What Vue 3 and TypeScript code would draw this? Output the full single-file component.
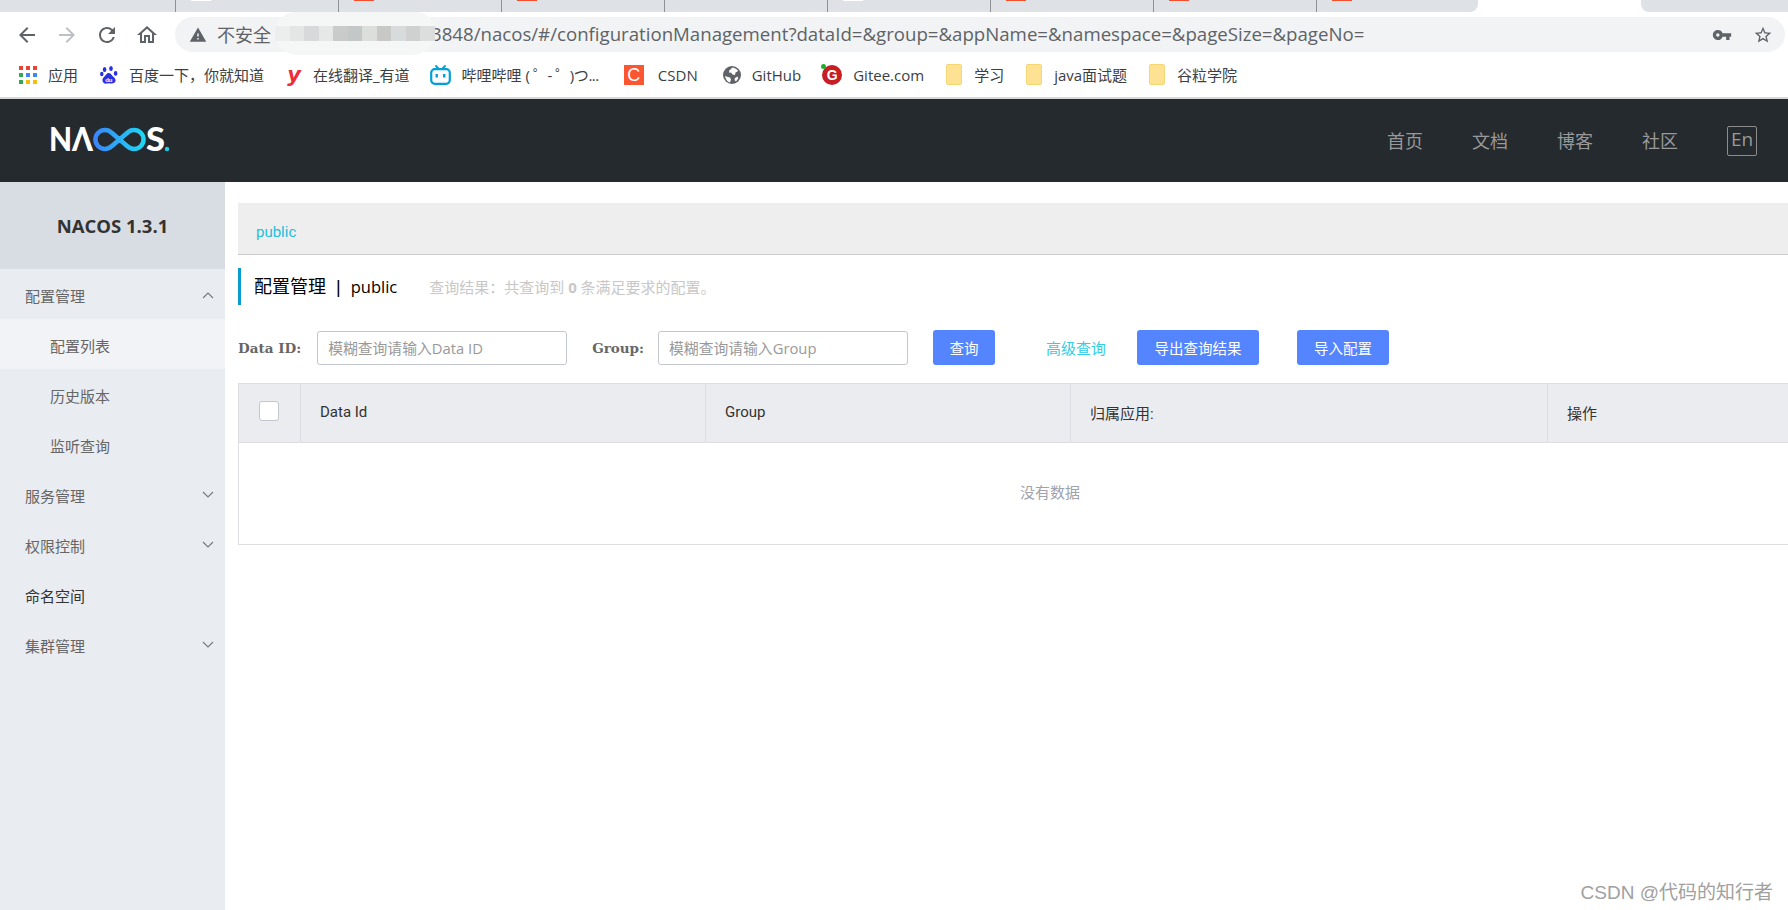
<script setup lang="ts">
type Tab = { favicon?: 'red' | 'white'; active?: boolean }
type SideItem = { label: string; sub?: boolean; selected?: boolean; dark?: boolean; arrow?: 'up' | 'down' }

const tabs: Tab[] = [
  {},
  { favicon: 'white' },
  { favicon: 'red' },
  { favicon: 'red' },
  {},
  { favicon: 'white' },
  { favicon: 'red' },
  { favicon: 'red' },
  { favicon: 'red' },
  { active: true },
  {},
]

const mosaic = ['#eceeee', '#e4e6e6', '#d7d9da', '#e6e8e8', '#c9cbca', '#c3c7c8', '#dcdedc', '#c8c9c7', '#d8dbdc', '#cfd1d1', '#dcdede']

const navLinks = ['首页', '文档', '博客', '社区']

const sideItems: SideItem[] = [
  { label: '配置管理', arrow: 'up' },
  { label: '配置列表', sub: true, selected: true },
  { label: '历史版本', sub: true },
  { label: '监听查询', sub: true },
  { label: '服务管理', arrow: 'down' },
  { label: '权限控制', arrow: 'down' },
  { label: '命名空间', dark: true },
  { label: '集群管理', arrow: 'down' },
]
</script>

<template>
  <div class="page">
    <div class="tab-strip">
      <div
        v-for="(tab, i) in tabs"
        :key="i"
        class="tab"
        :class="{ active: tab.active, 'before-active': tabs[i + 1]?.active, 'after-active': tabs[i - 1]?.active }"
      >
        <span v-if="tab.favicon" class="favicon" :class="tab.favicon"></span>
      </div>
    </div>

    <div class="toolbar">
      <svg class="tool-btn" viewBox="0 0 24 24"><path fill="#5f6368" d="M20 11H7.83l5.59-5.59L12 4l-8 8 8 8 1.41-1.41L7.83 13H20v-2z" /></svg>
      <svg class="tool-btn" viewBox="0 0 24 24"><path fill="#bdc1c6" d="M4 11h12.17l-5.59-5.59L12 4l8 8-8 8-1.41-1.41L16.17 13H4v-2z" /></svg>
      <svg class="tool-btn" viewBox="0 0 24 24"><path fill="#5f6368" d="M17.65 6.35A7.958 7.958 0 0012 4c-4.42 0-7.99 3.58-7.99 8s3.57 8 7.99 8c3.73 0 6.84-2.55 7.73-6h-2.08A5.99 5.99 0 0112 18c-3.31 0-6-2.69-6-6s2.69-6 6-6c1.66 0 3.14.69 4.22 1.78L13 11h7V4l-2.35 2.35z" /></svg>
      <svg class="tool-btn" viewBox="0 0 24 24"><path fill="#5f6368" d="M12 5.69l5 4.5V18h-2v-6H9v6H7v-7.81l5-4.5M12 3L2 12h3v8h6v-6h2v6h6v-8h3L12 3z" /></svg>

      <div class="omnibox">
        <svg class="warn" viewBox="0 0 24 24"><path fill="#5f6368" d="M1 21h22L12 2 1 21zm12-3h-2v-2h2v2zm0-4h-2v-4h2v4z" /></svg>
        <span class="not-secure">不安全</span>
        <span class="url">3848/nacos/#/configurationManagement?dataId=&amp;group=&amp;appName=&amp;namespace=&amp;pageSize=&amp;pageNo=</span>
        <svg class="omni-icon key" viewBox="0 0 24 24"><path fill="#5f6368" d="M12.65 10A5.99 5.99 0 007 6c-3.31 0-6 2.69-6 6s2.69 6 6 6a5.99 5.99 0 005.65-4H17v4h4v-4h2v-4H12.65zM7 14c-1.1 0-2-.9-2-2s.9-2 2-2 2 .9 2 2-.9 2-2 2z" /></svg>
        <svg class="omni-icon star" viewBox="0 0 24 24"><path fill="#5f6368" d="M22 9.24l-7.19-.62L12 2 9.19 8.63 2 9.24l5.46 4.73L5.82 21 12 17.27 18.18 21l-1.63-7.03L22 9.24zM12 15.4l-3.76 2.27 1-4.28-3.32-2.88 4.38-.38L12 6.1l1.71 4.04 4.38.38-3.32 2.88 1 4.28L12 15.4z" /></svg>
      </div>

      <!-- smudged host name -->
      <div class="smudge">
        <span v-for="(c, i) in mosaic" :key="i" class="cell" :style="{ background: c }"></span>
      </div>
    </div>

    <div class="bookmarks">
      <div class="bm">
        <svg class="bm-icon" viewBox="0 0 18 18">
          <rect x="0" y="0" width="4" height="4" fill="#ea4335" /><rect x="7" y="0" width="4" height="4" fill="#ea4335" /><rect x="14" y="0" width="4" height="4" fill="#ea4335" />
          <rect x="0" y="7" width="4" height="4" fill="#34a853" /><rect x="7" y="7" width="4" height="4" fill="#4285f4" /><rect x="14" y="7" width="4" height="4" fill="#4285f4" />
          <rect x="0" y="14" width="4" height="4" fill="#34a853" /><rect x="7" y="14" width="4" height="4" fill="#fbbc05" /><rect x="14" y="14" width="4" height="4" fill="#fbbc05" />
        </svg>
        <span>应用</span>
      </div>
      <div class="bm">
        <svg class="bm-icon" viewBox="0 0 18 18">
          <ellipse cx="4.6" cy="3.6" rx="1.8" ry="2.5" fill="#2932e1" />
          <ellipse cx="11" cy="2.6" rx="1.8" ry="2.5" fill="#2932e1" />
          <ellipse cx="1.8" cy="8" rx="1.7" ry="2.2" fill="#2932e1" />
          <ellipse cx="15.6" cy="7.4" rx="1.8" ry="2.3" fill="#2932e1" />
          <path fill="#2932e1" d="M8.6 7C6.8 7 6 9 4.5 10.5 3 12 2 13.2 2.6 15.2c.6 2 2.4 2.6 3.8 2.4 1-.1 1.6-.4 2.4-.4s1.500.4 2.800.4c2 0 4-1.100 4-3.300 0-2-2-3-3.300-4.500C11.300 8.600 10.600 7 8.600 7z" />
          <text x="8.800" y="15.500" class="du">du</text>
        </svg>
        <span>百度一下，你就知道</span>
      </div>
      <div class="bm">
        <span class="bm-glyph youdao">y</span>
        <span>在线翻译_有道</span>
      </div>
      <div class="bm bili">
        <svg class="bm-icon" viewBox="0 0 21 20">
          <path d="M6 1l3 3M15 1l-3 3" stroke="#00a1d6" stroke-width="1.800" stroke-linecap="round" fill="none" />
          <rect x="1.200" y="4.200" width="18.600" height="14.600" rx="3.500" fill="none" stroke="#00a1d6" stroke-width="2.200" />
          <rect x="5.500" y="9" width="2.400" height="3.500" fill="#00a1d6" />
          <rect x="13" y="9" width="2.400" height="3.500" fill="#00a1d6" />
        </svg>
        <span>哔哩哔哩 <span class="kaomoji">( ゜- ゜)つ...</span></span>
      </div>
      <div class="bm csdn-bm">
        <span class="bm-glyph csdn">C</span>
        <span>CSDN</span>
      </div>
      <div class="bm github-bm">
        <svg class="bm-icon" viewBox="0 0 18 18">
          <circle cx="9" cy="9" r="9" fill="#5f6368" />
          <path fill="#fff" d="M9.500 1.500C12 2 14 3.200 15.200 5l-2.700 1.500-.5 2.500-2.500-.5L8 6.500l-1.500.5L6 4.800zM2 10l3 1 2 .5 1 2-1 3C4.500 16 2.800 13.500 2 10zM12 12l2.500-1.500.8 1.800L13 15.500 11.500 14z" />
        </svg>
        <span>GitHub</span>
      </div>
      <div class="bm gitee">
        <span class="gitee-icon"><span class="gitee-dot"></span>G</span>
        <span>Gitee.com</span>
      </div>
      <div v-for="name in ['学习', 'java面试题', '谷粒学院']" :key="name" class="bm folder-bm">
        <span class="folder"></span>
        <span>{{ name }}</span>
      </div>
    </div>

    <header class="nacos-header">
      <svg class="logo" viewBox="0 -6 122 36">
        <defs>
          <linearGradient id="inf" x1="0" y1="0" x2="1" y2="0">
            <stop offset="0" stop-color="#3a86fb" />
            <stop offset="1" stop-color="#1fd6f2" />
          </linearGradient>
        </defs>
        <text class="logo-text" x="0" y="23" textLength="44" lengthAdjust="spacingAndGlyphs">NΛ</text>
        <path d="M62.700 4.800A9.500 9.500 0 1 0 62.700 18.200L78.300 4.800A9.500 9.500 0 1 1 78.300 18.200Z" fill="none" stroke="url(#inf)" stroke-width="4.500" />
        <text class="logo-text" x="97" y="23" textLength="19" lengthAdjust="spacingAndGlyphs">S</text>
        <circle cx="118" cy="21" r="2.200" fill="#1fcfe8" />
      </svg>
      <nav class="nav-links">
        <a v-for="link in navLinks" :key="link" class="nav-link">{{ link }}</a>
        <span class="lang-btn">En</span>
      </nav>
    </header>

    <div class="body-row">
      <aside class="sidebar">
        <div class="product">NACOS 1.3.1</div>
        <div
          v-for="item in sideItems"
          :key="item.label"
          class="side-item"
          :class="{ sub: item.sub, selected: item.selected, dark: item.dark }"
        >
          <span>{{ item.label }}</span>
          <svg v-if="item.arrow" class="chevron" viewBox="0 0 12 8">
            <polyline
              :points="item.arrow === 'up' ? '1,7 6,2 11,7' : '1,1 6,6 11,1'"
              fill="none"
              stroke="#777"
              stroke-width="1.100"
            />
          </svg>
        </div>
      </aside>

      <main class="content">
        <div class="namespace-bar"><a class="ns-link">public</a></div>

        <div class="title-row">
          <h1 class="page-title">配置管理<span class="title-sep">|</span><span class="title-ns">public</span></h1>
          <span class="result-hint">查询结果：共查询到 <b>0</b> 条满足要求的配置。</span>
        </div>

        <form class="search-form" @submit.prevent>
          <label class="field-label">Data ID:</label>
          <input class="field-input" placeholder="模糊查询请输入Data ID" />
          <label class="field-label group-label">Group:</label>
          <input class="field-input" placeholder="模糊查询请输入Group" />
          <button class="btn query-btn">查询</button>
          <a class="advanced">高级查询</a>
          <button class="btn export-btn">导出查询结果</button>
          <button class="btn import-btn">导入配置</button>
        </form>

        <table class="config-table">
          <colgroup>
            <col class="col-check" />
            <col class="col-id" />
            <col class="col-group" />
            <col class="col-app" />
            <col />
          </colgroup>
          <thead>
            <tr>
              <th><span class="checkbox"></span></th>
              <th>Data Id</th>
              <th>Group</th>
              <th>归属应用:</th>
              <th>操作</th>
            </tr>
          </thead>
          <tbody>
            <tr>
              <td colspan="5" class="empty">没有数据</td>
            </tr>
          </tbody>
        </table>
      </main>
    </div>

    <div class="watermark">CSDN @代码的知行者</div>
  </div>
</template>

<style scoped>
.page {
  position: relative;
  width: 1788px;
  height: 910px;
  overflow: hidden;
  background: #fff;
  font-family: "Open Sans", "Noto Sans CJK SC", sans-serif;
}

/* browser chrome */
.tab-strip {
  display: flex;
  height: 12px;
}

.tab {
  flex: 0 0 163px;
  background: #dee1e6;
  border-left: 1px solid #8e9297;
  box-sizing: border-box;
}

.tab:first-child {
  flex-basis: 175px;
  border-left: none;
}

.tab.active {
  flex-basis: 163px;
  background: #fff;
  border-left: none;
}

.tab.before-active {
  flex-basis: 162px;
  border-bottom-right-radius: 8px;
}

.tab.after-active {
  flex: 1;
  border-left: none;
  border-bottom-left-radius: 8px;
}

.favicon {
  display: block;
  width: 20px;
  height: 1px;
  margin-left: 15px;
}

.favicon.red {
  background: #f1502f;
}

.favicon.white {
  background: #fff;
}

.toolbar {
  position: relative;
  display: flex;
  align-items: center;
  height: 45px;
  padding-left: 15px;
  box-sizing: border-box;
}

.tool-btn {
  width: 24px;
  height: 24px;
  margin-right: 16px;
}

.omnibox {
  display: flex;
  align-items: center;
  width: 1610px;
  height: 35px;
  padding: 0 12px 0 14px;
  box-sizing: border-box;
  background: #f1f3f4;
  border-radius: 18px;
}

.warn {
  width: 18px;
  height: 18px;
}

.not-secure {
  width: 214px;
  margin-left: 10px;
  padding-bottom: 2px;
  font-size: 18px;
  color: #5f6368;
}

.url {
  flex: 1;
  padding-bottom: 2px;
  font-size: 18.65px;
  color: #5f6368;
  white-space: nowrap;
}

.omni-icon {
  width: 20px;
  height: 20px;
}

.key {
  margin-right: 21px;
}

.smudge {
  position: absolute;
  top: 0;
  left: 275px;
  display: flex;
  align-items: center;
  width: 160px;
  height: 43px;
  background: #f5f7f7;
  border-radius: 22px 20px 24px 24px;
}

.cell {
  flex: 1;
  height: 15px;
}

.bookmarks {
  display: flex;
  align-items: center;
  gap: 22px;
  height: 35px;
  padding: 0 0 5px 19px;
  border-bottom: 2px solid #d9d9d9;
  font-size: 15px;
  color: #3c4043;
  white-space: nowrap;
}

.bm {
  display: flex;
  align-items: center;
  gap: 11px;
}

.bm-icon {
  width: 18px;
  height: 18px;
}

.bili {
  margin-left: -2px;
}

.bili .bm-icon {
  width: 21px;
  height: 20px;
}

.kaomoji {
  letter-spacing: -0.45px;
}

.du {
  font-family: "Liberation Sans", sans-serif;
  font-size: 6px;
  font-weight: 700;
  fill: #fff;
  text-anchor: middle;
}

.bm-glyph {
  display: block;
  text-align: center;
  font-family: "Liberation Sans", sans-serif;
  font-weight: 700;
}

.youdao {
  width: 16px;
  font-family: "DejaVu Sans", sans-serif;
  font-size: 21px;
  line-height: 18px;
  font-style: italic;
  color: #ee2d3a;
}

.csdn-bm {
  gap: 14px;
  margin-left: 3px;
}

.github-bm {
  margin-left: 3px;
}

.csdn {
  width: 20px;
  height: 20px;
  background: #fc5531;
  color: #fff;
  font-size: 18px;
  font-weight: 400;
  line-height: 20px;
}

.gitee {
  margin-left: -1px;
}

.gitee-icon {
  position: relative;
  display: block;
  width: 20px;
  height: 20px;
  background: #c71d23;
  border-radius: 50%;
  color: #fff;
  font-family: "Liberation Sans", sans-serif;
  font-size: 14px;
  font-weight: 700;
  line-height: 20px;
  text-align: center;
}

.gitee-dot {
  position: absolute;
  top: -1px;
  left: -1px;
  width: 5px;
  height: 5px;
  background: #1fae2c;
  border-radius: 50%;
}

.folder-bm {
  gap: 12px;
}

.folder {
  display: block;
  width: 14px;
  height: 19px;
  background: #fde293;
  border: 1px solid #f5d776;
  border-radius: 2px;
}

/* nacos header */
.nacos-header {
  display: flex;
  align-items: center;
  height: 83px;
  padding: 0 31px 0 49px;
  background: #252a2f;
}

.logo {
  width: 122px;
  height: 36px;
  margin-top: -2px;
  overflow: visible;
}

.logo-text {
  font-family: Lato, sans-serif;
  font-size: 32px;
  font-weight: 900;
  fill: #fff;
}

.nav-links {
  display: flex;
  align-items: center;
  gap: 49px;
  margin-left: auto;
}

.nav-link {
  padding-bottom: 2px;
  font-size: 18px;
  color: #999;
}

.lang-btn {
  width: 30px;
  height: 30px;
  box-sizing: border-box;
  border: 1px solid #8c8c8c;
  border-radius: 2px;
  color: #999;
  font-size: 19px;
  line-height: 24px;
  text-align: center;
}

.body-row {
  display: flex;
  height: 728px;
}

/* sidebar */
.sidebar {
  flex: 0 0 225px;
  background: #e9ecf1;
}

.product {
  height: 87px;
  background: #d8dce3;
  color: #333;
  font-size: 18.5px;
  font-weight: 700;
  line-height: 87px;
  text-align: center;
}

.side-item {
  position: relative;
  display: flex;
  align-items: center;
  height: 50px;
  padding: 2px 0 0 25px;
  box-sizing: border-box;
  font-size: 15px;
  color: #666;
}

.side-item.sub {
  padding-left: 50px;
}

.side-item.selected {
  background: #f2f3f7;
}

.side-item.dark {
  color: #333;
}

.chevron {
  position: absolute;
  top: 22px;
  right: 11px;
  width: 12px;
  height: 8px;
}

/* content */
.content {
  flex: 1;
  min-width: 0;
  padding: 21px 0 0 13px;
  overflow: hidden;
}

.namespace-bar {
  height: 52px;
  padding: 19px 0 0 18px;
  box-sizing: border-box;
  background: #eee;
  border-bottom: 1px solid #ccc;
}

.ns-link {
  display: block;
  font-family: Roboto, sans-serif;
  font-size: 15px;
  line-height: 20px;
  color: #1fbfdd;
}

.title-row {
  display: flex;
  align-items: center;
  height: 37px;
  margin-top: 13px;
  border-left: 3px solid #0a9bcf;
}

.page-title {
  margin: 0 0 0 13px;
  padding-bottom: 3px;
  font-size: 18px;
  font-weight: 400;
  color: #000;
}

.title-sep {
  margin: 0 10px;
  font-family: "Liberation Sans", sans-serif;
}

.title-ns {
  font-size: 16.5px;
}

.result-hint {
  margin-left: 32px;
  font-size: 15px;
  color: #c8c8c8;
}

.search-form {
  display: flex;
  align-items: center;
  height: 35px;
  margin-top: 25px;
  white-space: nowrap;
}

.field-label {
  margin-right: 16px;
  font-family: "DejaVu Serif", "Noto Sans CJK SC", serif;
  font-size: 13.5px;
  font-weight: 700;
  color: #666;
}

.group-label {
  margin-left: 25px;
  margin-right: 14px;
}

.field-input {
  width: 250px;
  height: 34px;
  padding: 0 10px;
  box-sizing: border-box;
  border: 1px solid #c4c6cf;
  border-radius: 3px;
  outline: none;
  font-family: inherit;
  font-size: 14.8px;
}

.field-input::placeholder {
  color: #999;
}

.btn {
  height: 35px;
  padding: 0;
  border: none;
  border-radius: 3px;
  background: #5584ff;
  color: #fff;
  font-family: inherit;
  font-size: 14.5px;
}

.query-btn {
  width: 62px;
  margin-left: 25px;
}

.advanced {
  margin-left: 51px;
  font-size: 15px;
  color: #33cde5;
}

.export-btn {
  width: 122px;
  margin-left: 31px;
}

.import-btn {
  width: 92px;
  margin-left: 38px;
}

.config-table {
  width: 1624px;
  margin-top: 18px;
  border-collapse: collapse;
  table-layout: fixed;
  border: 1px solid #dcdee3;
  font-family: Roboto, "Noto Sans CJK SC", sans-serif;
  font-size: 15px;
}

.col-check {
  width: 62px;
}

.col-id {
  width: 405px;
}

.col-group {
  width: 365px;
}

.col-app {
  width: 477px;
}

.config-table th {
  height: 59px;
  padding: 0 0 2px 19px;
  box-sizing: border-box;
  background: #ebecf0;
  border-right: 1px solid #dcdee3;
  border-bottom: 1px solid #dcdee3;
  color: #333;
  font-weight: 400;
  text-align: left;
}

.config-table th:first-child {
  padding: 0 0 4px 20px;
}

.checkbox {
  display: block;
  width: 20px;
  height: 20px;
  box-sizing: border-box;
  background: #fff;
  border: 1px solid #c4c6cf;
  border-radius: 3px;
}

.empty {
  height: 102px;
  padding-bottom: 5px;
  box-sizing: border-box;
  color: #a0a2ad;
  text-align: center;
}

.watermark {
  position: absolute;
  right: 15px;
  bottom: 6px;
  font-family: "Liberation Sans", "Noto Sans CJK SC", sans-serif;
  font-size: 19px;
  color: #a0a0a0;
}
</style>

<style>
html,
body {
  margin: 0;
  overflow: hidden;
  background: #fff;
}
</style>
